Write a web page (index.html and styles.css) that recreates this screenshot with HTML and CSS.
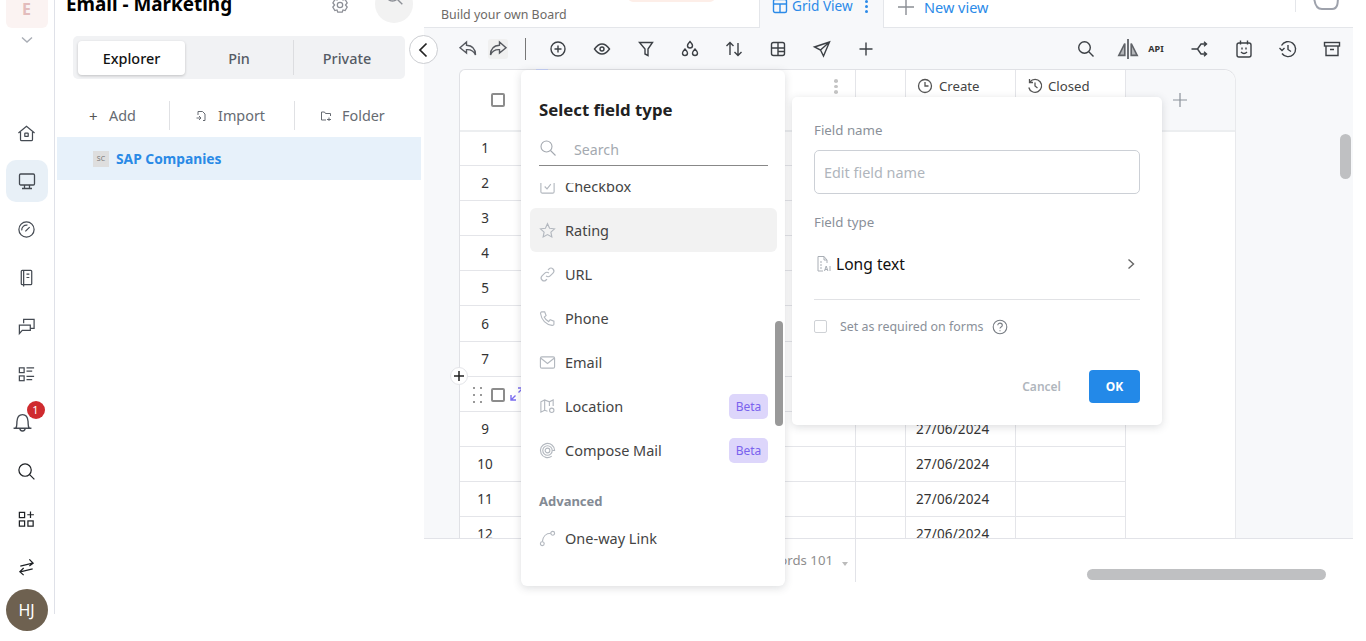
FILE: index.html
```html
<!DOCTYPE html>
<html lang="en">
<head>
<meta charset="utf-8">
<title>Email - Marketing</title>
<link rel="stylesheet" href="styles.css">
</head>
<body>
<div class="app">
  <nav class="rail">
    <div class="org">E</div>
    <svg class="org-chevron" width="14" height="8" viewBox="0 0 14 8"><path d="M2 1.500l5 4.500 5-4.500"/></svg>
    <div class="rail-list">
      <a class="rail-item"><svg viewBox="0 0 20 20"><path d="M1.500 9.500L10 2.500l8.500 7M3.700 8.500v7.700q0 1.300 1.300 1.300h10q1.300 0 1.300-1.300V8.500"/><rect x="8.200" y="9.500" width="3.600" height="3.600" rx=".6"/></svg></a>
      <a class="rail-item rail-active"><svg viewBox="0 0 20 20"><rect x="2.500" y="3" width="15" height="11" rx="1.200"/><path d="M7.500 14v3.500M12.500 14v3.500M5 17.500h10"/></svg></a>
      <a class="rail-item"><svg viewBox="0 0 20 20"><circle cx="10" cy="10" r="8"/><path d="M5 11a5 5 0 0 1 6-5.500M8.800 12l4.500-4.500"/></svg></a>
      <a class="rail-item"><svg viewBox="0 0 20 20"><rect x="4.500" y="2.500" width="11" height="15" rx="1"/><path d="M7 2.500v17M10 6.500h3M10 10h3"/></svg></a>
      <a class="rail-item"><svg viewBox="0 0 20 20"><path d="M7 6.500V2.500h11V12h-4M2.500 8.500H14v5.500H5.500L2.500 17.500z"/></svg></a>
      <a class="rail-item"><svg viewBox="0 0 20 20"><rect x="2.500" y="3" width="5" height="5"/><rect x="2.500" y="11.500" width="5" height="5"/><path d="M10 3h8M10 6.500h6M10 12h8M10 15.500h6"/></svg></a>
      <a class="rail-item rail-bell"><svg viewBox="0 0 20 20"><path d="M1.500 15.500h17M3.500 15.500c1.500-2 1-4 1.200-6.500C5 5 7 2.500 10 2.500s5 2.500 5.300 6.500c.2 2.500-.3 4.500 1.200 6.500M7.500 15.500c0 3.500 5 3.500 5 0"/></svg><span class="badge">1</span></a>
      <a class="rail-item rail-dark"><svg viewBox="0 0 20 20"><circle cx="8.500" cy="8.500" r="6.500"/><path d="M13.300 13.300l5 5"/></svg></a>
      <a class="rail-item rail-dark"><svg viewBox="0 0 20 20"><rect x="2.500" y="2.500" width="5.500" height="5.500"/><rect x="2.500" y="11.500" width="5.500" height="5.500"/><rect x="11.500" y="11.500" width="5.500" height="5.500"/><path d="M14.200 1.500v7M10.800 5h7"/></svg></a>
      <a class="rail-item rail-dark"><svg viewBox="0 0 20 20"><path d="M3.500 8.500L16.500 5.500M13 1.500l4 4-4 3M16.500 11.500l-13 3M7 10.500l-4 4 4 3.500"/></svg></a>
    </div>
    <div class="avatar">HJ</div>
  </nav>

  <aside class="side">
    <header class="side-head">
      <h1 class="side-title">Email - Marketing</h1>
      <svg class="side-gear" width="18" height="18" viewBox="0 0 20 20"><path d="M7.500 2h5l.8 2.500 2.400-.7 2.300 4-1.900 2.200 1.900 2.200-2.300 4-2.400-.7-.8 2.500h-5l-.8-2.500-2.400.7-2.300-4L4 10 2.100 7.800l2.300-4 2.400.7z"/><circle cx="10" cy="10" r="3"/></svg>
      <div class="side-search"><svg width="20" height="20" viewBox="0 0 20 20"><circle cx="8.500" cy="8.500" r="6.500"/><path d="M13.300 13.300l5 5"/></svg></div>
    </header>
    <div class="seg">
      <div class="seg-item seg-active">Explorer</div>
      <div class="seg-item seg-pin">Pin</div>
      <div class="seg-item seg-private">Private</div>
    </div>
    <div class="actions">
      <div class="action action-add"><span class="action-plus">+</span><span>Add</span></div>
      <div class="action action-import"><svg width="12" height="12" viewBox="0 0 12 12"><path d="M4 1.500h3.500L10 4v6.500H8M3 5V1.500h1M1.500 8H6M4 6L6 8l-2 2"/></svg><span>Import</span></div>
      <div class="action action-folder"><svg width="12" height="12" viewBox="0 0 12 12"><path d="M6 10H1.500V2h3l1 1.500h5V6M9 7.500v3.500M7 9.500h4"/></svg><span>Folder</span></div>
    </div>
    <div class="tree-row"><span class="tree-icon">SC</span><span class="tree-name">SAP Companies</span></div>
  </aside>

  <main class="main">
    <div class="tabs">
      <div class="board-sub">Build your own Board</div>
      <div class="board-pill"></div>
      <div class="tab-active">
        <svg class="tab-grid" width="16" height="16" viewBox="0 0 16 16"><rect x="1.500" y="1.500" width="13" height="13" rx="1.500"/><path d="M1.500 6h13M8 6v8.500"/></svg>
        <span>Grid View</span>
        <span class="tab-kebab"><i></i><i></i><i></i></span>
      </div>
      <div class="tab-new">
        <svg width="18" height="18" viewBox="0 0 18 18"><path d="M9 1v16M1 9h16"/></svg>
        <span>New view</span>
      </div>
      <div class="tabs-end"><svg width="28" height="12" viewBox="0 0 28 12"><path d="M2 -6c0 10 2 15 8 15h10c6 0 6-6 6-15"/></svg></div>
    </div>

    <div class="toolbar">
      <button class="tool tool-undo"><svg viewBox="0 0 20 20"><path d="M8.500 3L2 8.800 8.500 14v-3.300c4-.3 7 .7 9 5.300 0-6-3.500-9.500-9-9.800z"/></svg></button>
      <button class="tool tool-redo"><svg viewBox="0 0 20 20"><path d="M11.500 3L18 8.800 11.500 14v-3.300c-4-.3-7 .7-9 5.300 0-6 3.500-9.500 9-9.800z"/></svg></button>
      <span class="tool-sep"></span>
      <button class="tool"><svg viewBox="0 0 20 20"><circle cx="10" cy="10" r="7"/><path d="M10 6.500v7M6.500 10h7"/></svg></button>
      <button class="tool"><svg viewBox="0 0 20 20"><path d="M2.500 10C5 6.500 7.500 5 10 5s5 1.500 7.500 5c-2.500 3.500-5 5-7.500 5s-5-1.500-7.500-5z"/><circle cx="10" cy="10" r="2"/></svg></button>
      <button class="tool"><svg viewBox="0 0 20 20"><path d="M3.500 3.500h13L12 10v6.500L9 15v-5z"/></svg></button>
      <button class="tool"><svg viewBox="0 0 20 20"><path d="M10 2.500c1.800 2 2.500 3 2.500 4a2.500 2.500 0 0 1-5 0c0-1 .7-2 2.500-4zM5 10c1.800 2 2.500 3 2.500 4a2.500 2.500 0 0 1-5 0c0-1 .7-2 2.500-4zM15 10c1.800 2 2.500 3 2.500 4a2.500 2.500 0 0 1-5 0c0-1 .7-2 2.500-4z"/></svg></button>
      <button class="tool"><svg viewBox="0 0 20 20"><path d="M6 16V3.500M2.500 7L6 3.500 9.500 7M14 4v12.500M10.500 13l3.500 3.500 3.500-3.500"/></svg></button>
      <button class="tool"><svg viewBox="0 0 20 20"><rect x="3.500" y="3.500" width="13" height="13" rx="2"/><path d="M3.500 9h13M10 3.500v13M10 12.500h6.500"/></svg></button>
      <button class="tool"><svg viewBox="0 0 20 20"><path d="M17.500 3L2.500 8l6 3 3 6zM8.500 11L17.500 3"/></svg></button>
      <button class="tool"><svg viewBox="0 0 20 20"><path d="M10 3.500v13M3.500 10h13"/></svg></button>
      <button class="tool tool-right"><svg viewBox="0 0 20 20"><circle cx="8.500" cy="8.500" r="5.800"/><path d="M12.800 12.800l4.700 4.700"/></svg></button>
      <button class="tool tool-compare"><svg viewBox="0 0 24 24"><path class="thick" d="M12 1v22"/><path class="filled" d="M8.500 6L2 19h6.500zM15.500 6L22 19h-6.500z"/></svg></button>
      <span class="tool-api">API</span>
      <button class="tool"><svg viewBox="0 0 20 20"><path d="M1.500 10h6M7.500 10l3.500-5h5M7.500 10l3.500 5h5M14 2.800L16.500 5 14 7.200M14 12.800l2.500 2.200-2.500 2.200"/></svg></button>
      <button class="tool"><svg viewBox="0 0 20 20"><rect x="3" y="4" width="14" height="14" rx="2"/><path d="M6.500 1.500v4M13.500 1.500v4M8 8.500v2M12 8.500v2M7 13c2 2 4 2 6 0"/></svg></button>
      <button class="tool"><svg viewBox="0 0 20 20"><path d="M3.500 6.500A7.500 7.500 0 1 1 4 14.500M1.500 9l2.500 2.500L6.500 9M10 6v4.500l3 2"/></svg></button>
      <button class="tool"><svg viewBox="0 0 20 20"><rect x="2.500" y="3.500" width="15" height="3.500"/><path d="M4 7v9.500h12V7M8 10.500h4"/></svg></button>
    </div>

    <div class="board">
      <div class="sheet">
        <div class="sheet-tick"></div>
        <div class="sheet-head">
          <div class="head-main">
            <span class="box box-head"></span>
            <span class="head-kebab"><i></i><i></i><i></i></span>
          </div>
          <div class="head-cell"></div>
          <div class="head-cell head-date">
            <svg width="16" height="16" viewBox="0 0 16 16"><circle cx="8" cy="8" r="6.500"/><path d="M8 4v4h3.500"/></svg><span>Create</span>
          </div>
          <div class="head-cell head-date">
            <svg width="16" height="16" viewBox="0 0 16 16"><path d="M3 3.800A6.500 6.500 0 1 1 1.800 9.500M2.500 1v3.500H6M8 4.500V8l2.500 2"/></svg><span>Closed</span>
          </div>
          <div class="head-add"><svg width="16" height="16" viewBox="0 0 16 16"><path d="M8 1v14M1 8h14"/></svg></div>
        </div>
        <div class="row"><div class="c-main"><span class="num">1</span></div><div class="c"></div><div class="c c-date">27/06/2024</div><div class="c"></div></div>
        <div class="row"><div class="c-main"><span class="num">2</span></div><div class="c"></div><div class="c c-date">27/06/2024</div><div class="c"></div></div>
        <div class="row"><div class="c-main"><span class="num">3</span></div><div class="c"></div><div class="c c-date">27/06/2024</div><div class="c"></div></div>
        <div class="row"><div class="c-main"><span class="num">4</span></div><div class="c"></div><div class="c c-date">27/06/2024</div><div class="c"></div></div>
        <div class="row"><div class="c-main"><span class="num">5</span></div><div class="c"></div><div class="c c-date">27/06/2024</div><div class="c"></div></div>
        <div class="row"><div class="c-main"><span class="num">6</span></div><div class="c"></div><div class="c c-date">27/06/2024</div><div class="c"></div></div>
        <div class="row"><div class="c-main"><span class="num">7</span></div><div class="c"></div><div class="c c-date">27/06/2024</div><div class="c"></div></div>
        <div class="row"><div class="c-main c-hover">
          <span class="grip"><i></i><i></i><i></i><i></i><i></i><i></i></span>
          <span class="box"></span>
          <svg class="expand" width="14" height="14" viewBox="0 0 14 14"><path d="M8 1h5v5M13 1L8.500 5.500M6 13H1V8M1 13l4.500-4.500"/></svg>
        </div><div class="c"></div><div class="c c-date">27/06/2024</div><div class="c"></div></div>
        <div class="row"><div class="c-main"><span class="num">9</span></div><div class="c"></div><div class="c c-date">27/06/2024</div><div class="c"></div></div>
        <div class="row"><div class="c-main"><span class="num">10</span></div><div class="c"></div><div class="c c-date">27/06/2024</div><div class="c"></div></div>
        <div class="row"><div class="c-main"><span class="num">11</span></div><div class="c"></div><div class="c c-date">27/06/2024</div><div class="c"></div></div>
        <div class="row"><div class="c-main"><span class="num">12</span></div><div class="c"></div><div class="c c-date">27/06/2024</div><div class="c"></div></div>
      </div>
    </div>

    <footer class="foot">
      <div class="records"><span>Records 101</span><i class="caret"></i></div>
      <div class="hscroll"></div>
    </footer>

    <div class="vscroll"></div>
  </main>
</div>

<button class="collapse"><svg width="12" height="16" viewBox="0 0 12 16"><path d="M9.500 1.500L3 8l6.500 6.500"/></svg></button>
<button class="row-add"><svg width="12" height="12" viewBox="0 0 12 12"><path d="M6 1v10M1 6h10"/></svg></button>

<section class="picker">
  <h2 class="picker-title">Select field type</h2>
  <div class="picker-search">
    <svg width="18" height="18" viewBox="0 0 18 18"><circle cx="7.500" cy="7.500" r="5.500"/><path d="M11.500 11.500l5 5"/></svg>
    <span>Search</span>
  </div>
  <div class="picker-list">
    <div class="pick pick-cut"><svg viewBox="0 0 18 18"><rect x="2" y="2" width="14" height="14" rx="1.500"/><path d="M6 9l2.500 2.500L12.500 6.500"/></svg><span>Checkbox</span></div>
    <div class="pick pick-on"><svg viewBox="0 0 18 18"><path d="M9 1.800l2.200 4.800 5.200.6-3.800 3.500 1 5.200L9 13.300l-4.600 2.600 1-5.200-3.800-3.500 5.200-.6z"/></svg><span>Rating</span></div>
    <div class="pick"><svg viewBox="0 0 18 18"><path d="M7.500 10.500a3 3 0 0 0 4.300 0l3-3a3 3 0 0 0-4.300-4.300L9.500 4.300M10.500 7.500a3 3 0 0 0-4.300 0l-3 3a3 3 0 0 0 4.300 4.300l1-1"/></svg><span>URL</span></div>
    <div class="pick"><svg viewBox="0 0 18 18"><path d="M3 2h3l1.500 4-2 1.500c1 2.200 2.500 3.800 4.800 4.800l1.500-2 4 1.500v3c0 1-1 1.700-2 1.500C7.500 15.500 2.500 10.500 1.700 4 1.500 3 2 2 3 2z"/></svg><span>Phone</span></div>
    <div class="pick"><svg viewBox="0 0 18 18"><rect x="1.500" y="3" width="15" height="12" rx="1.500"/><path d="M2 4.500l7 5.500 7-5.500"/></svg><span>Email</span></div>
    <div class="pick"><svg viewBox="0 0 18 18"><path d="M6 13l-4 2V4l4-2 5 2 4-2v6.500M6 2v11M11 4v4.500M6 13l3 1"/><circle cx="13.500" cy="13" r="2.300"/></svg><span>Location</span><em class="beta">Beta</em></div>
    <div class="pick"><svg viewBox="0 0 18 18"><circle cx="9" cy="9" r="2.500"/><circle cx="9" cy="9" r="5"/><path d="M14 9h2.500a7.500 7.500 0 1 0-3 6"/></svg><span>Compose Mail</span><em class="beta">Beta</em></div>
    <div class="pick-group">Advanced</div>
    <div class="pick pick-link"><svg viewBox="0 0 18 18"><circle cx="3.500" cy="14.500" r="2"/><circle cx="14.500" cy="3.500" r="2"/><path d="M3.500 12.500C4 7 7.500 3.500 12.500 3.500"/></svg><span>One-way Link</span></div>
  </div>
  <div class="picker-thumb"></div>
</section>

<section class="field">
  <label class="field-label">Field name</label>
  <div class="field-input">Edit field name</div>
  <label class="field-label field-label-type">Field type</label>
  <div class="field-type">
    <svg class="ft-icon" width="16" height="18" viewBox="0 0 16 18"><path d="M7 16H2V1.500h6L11 5v3M8 1.500V5h3M4 7h2M4 10h2M4 13h2"/><path class="ft-ai" d="M8.500 16l1.700-5 1.700 5M9 14.500h2.500M14 11v5"/></svg>
    <span>Long text</span>
    <svg class="ft-chevron" width="8" height="12" viewBox="0 0 8 12"><path d="M1.500 1.500L6.500 6l-5 4.500"/></svg>
  </div>
  <div class="field-required">
    <span class="field-check"></span>
    <span>Set as required on forms</span>
    <svg width="16" height="16" viewBox="0 0 16 16"><circle cx="8" cy="8" r="6.800"/><path d="M5.800 6.300c0-3 4.500-2.800 4.500 0 0 1.800-2.300 1.700-2.300 3.200M8 11.200v1"/></svg>
  </div>
  <div class="field-buttons">
    <span class="btn-cancel">Cancel</span>
    <span class="btn-ok">OK</span>
  </div>
</section>
</body>
</html>
```
FILE: styles.css
```css
* { box-sizing: border-box; }
html, body { margin: 0; padding: 0; height: 641px; overflow: hidden; background: #fff; }
body { font-family: "Noto Sans", "Open Sans", sans-serif; color: #333; position: relative; }
button { border: 0; padding: 0; background: none; font: inherit; }
svg { display: block; fill: none; stroke: currentColor; stroke-width: 1.4; }

.app { display: flex; width: 1366px; height: 641px; }

/* left rail */
.rail { width: 55px; height: 614px; border-right: 1px solid #dfe1e8; display: flex; flex-direction: column; align-items: center; flex: none; padding-right: 1px; }
.org { width: 42px; height: 44px; margin-top: -16px; background: #fbf3f2; border-radius: 6px; color: #e3bcbc; font-weight: 700; font-size: 16px; display: flex; align-items: center; justify-content: center; padding-top: 6px; flex: none; }
.org-chevron { margin-top: 8px; color: #a9adb5; flex: none; }
.rail-list { margin-top: 68px; display: flex; flex-direction: column; align-items: center; flex: none; }
.rail-item { width: 42px; height: 42px; margin-bottom: 6.3px; display: flex; align-items: center; justify-content: center; color: #444a52; position: relative; border-radius: 10px; flex: none; }
.rail-item svg { width: 19px; height: 19px; stroke-width: 1.3; }
.rail-active { background: #e8f0f7; }
.rail-active svg { width: 20px; height: 20px; }
.rail-bell svg { width: 21px; height: 21px; margin-left: -9px; }
.rail-dark { color: #1f2226; }
.badge { position: absolute; left: 21px; top: -1px; width: 18px; height: 18px; border-radius: 50%; background: #cf2b2f; color: #fff; font-size: 11px; line-height: 18px; text-align: center; }
.avatar { width: 42px; height: 42px; border-radius: 50%; background: #6e6150; color: #fff; font-size: 16px; display: flex; align-items: center; justify-content: center; flex: none; margin-bottom: -30px; margin-top: -6px; }

/* explorer */
.side { width: 369px; flex: none; }
.side-head { height: 24px; margin-top: -8px; padding-left: 11px; display: flex; align-items: flex-end; position: relative; }
.side-title { margin: 0; font-size: 18.900px; font-weight: 700; color: #000; line-height: 24px; white-space: nowrap; }
.side-gear { position: absolute; left: 276px; top: 4px; color: #8c8f96; }
.side-search { position: absolute; left: 320px; top: -7px; width: 38px; height: 38px; border-radius: 50%; background: #f2f2f2; color: #8c8f96; display: flex; align-items: center; justify-content: center; padding-bottom: 16px; }
.seg { margin: 20px 0 0 18px; width: 332px; height: 43px; background: #f1f2f4; border-radius: 5px; display: flex; align-items: center; font-size: 14.400px; color: #555b64; position: relative; }
.seg-item { display: flex; align-items: center; justify-content: center; height: 35px; font-weight: 500; padding-top: 1px; }
.seg-active { width: 107px; height: 34px; margin-left: 5px; background: #fff; border-radius: 4px; box-shadow: 0 1px 3px rgba(0,0,0,.2); color: #111; }
.seg-pin { width: 109px; border-right: 1px solid #dcdde0; }
.seg-private { width: 106px; }
.actions { display: flex; align-items: center; margin: 22px 0 0 18px; height: 29px; font-size: 14.400px; color: #666b72; }
.action { display: flex; align-items: center; height: 29px; }
.action svg { flex: none; stroke-width: 1; }
.action-add { width: 97px; padding-left: 16px; border-right: 1px solid #e0e1e4; }
.action-plus { width: 20px; font-size: 15px; color: #555; }
.action-import { width: 125px; padding-left: 25px; gap: 11px; border-right: 1px solid #e0e1e4; }
.action-folder { padding-left: 25px; gap: 10px; }
.tree-row { margin: 7px 3px 0 2px; height: 43px; background: #e7f1fa; display: flex; align-items: center; padding-left: 36px; }
.tree-icon { width: 16px; height: 16px; background: #dedede; color: #777; font-size: 7px; text-align: center; line-height: 16px; margin-right: 7px; }
.tree-name { color: #2a8ae6; font-weight: 700; font-size: 13.800px; }

/* main */
.main { width: 929px; height: 641px; flex: none; display: flex; flex-direction: column; position: relative; }
.tabs { height: 28px; border-bottom: 1px solid #e4e6ea; display: flex; position: relative; flex: none; }
.board-sub { margin: 6px 0 0 17px; width: 318px; font-size: 12.400px; line-height: 18px; color: #6d6a66; flex: none; }
.board-pill { position: absolute; left: 204px; top: -8px; width: 87px; height: 10px; border-radius: 5px; background: #fdeee8; }
.tab-active { width: 125px; height: 28px; background: #f7f8fa; border-left: 1px solid #e4e6ea; border-right: 1px solid #e4e6ea; color: #2b8ae8; display: flex; align-items: center; font-size: 13.600px; padding: 0 0 16px 12px; flex: none; }
.tab-active span { line-height: 16px; }
.tab-grid { margin-right: 4px; flex: none; }
.tab-kebab { display: flex; flex-direction: column; gap: 2px; margin-left: 12px; }
.tab-kebab i { width: 3px; height: 3px; background: #2b8ae8; border-radius: 50%; }
.tab-new { display: flex; align-items: center; color: #2b8ae8; font-size: 14.500px; padding: 0 0 14px 13px; height: 28px; gap: 9px; }
.tab-new svg { color: #8b8e94; }
.tabs-end { position: absolute; left: 871px; top: 0; height: 12px; padding-left: 16px; border-left: 1px solid #e4e6ea; color: #9ea2ac; }
.tabs-end svg { stroke-width: 2; }

.toolbar { height: 41px; background: #f7f8fa; display: flex; align-items: center; padding: 0 11px 0 34px; flex: none; color: #3c4045; }
.tool { width: 20px; height: 20px; margin-right: 24px; color: inherit; flex: none; }
.tool svg { width: 20px; height: 20px; stroke-width: 1.4; }
.tool:last-child { margin-right: 0; }
.tool-undo { margin-right: 10px; color: #55585e; }
.tool-redo { margin-right: 17px; background: #f0f0f0; border-radius: 3px; color: #55585e; }
.tool-sep { width: 1px; height: 22px; background: #777; margin-right: 22px; flex: none; }
.tool-right { margin-left: auto; margin-right: 22px; }
.tool-compare { margin-right: 8px; color: #606368; }
.tool-compare svg { width: 22px; height: 22px; margin: -1px; stroke-width: 1.5; }
.tool-compare .filled { fill: #b5b7ba; stroke: #606368; stroke-width: 1.800; }
.tool-compare .thick { stroke-width: 2; }
.tool-api { width: 20px; font-size: 9px; font-weight: 700; color: #333; margin-right: 24px; text-align: center; flex: none; }

.board { height: 469px; background: #f7f8fa; overflow: hidden; padding-left: 35px; flex: none; }
.sheet { width: 777px; position: relative; background: #fff; border-left: 1px solid #e0e1e5; border-right: 1px solid #e8e9ec; border-top: 1px solid #e0e1e5; border-radius: 6px 12px 0 0; min-height: 520px; }
.sheet-tick { position: absolute; left: 76px; top: -1px; width: 12px; height: 3px; background: #c5cff5; }
.sheet-head { display: flex; height: 62px; border-bottom: 2px solid #eceef0; }
.head-main { width: 396px; border-right: 1px solid #e4e5e9; position: relative; display: flex; align-items: center; padding-left: 31px; }
.box { display: block; width: 14px; height: 14px; border: 2px solid #8c8c8c; border-radius: 2px; flex: none; }
.head-kebab { position: absolute; left: 374px; top: 9px; display: flex; flex-direction: column; gap: 2px; }
.head-kebab i { width: 4px; height: 3.500px; background: #c4c4c4; border-radius: 50%; }
.head-cell { width: 50px; border-right: 1px solid #e4e5e9; }
.head-date { width: 110px; display: flex; align-items: flex-start; padding: 8px 0 0 11px; font-size: 13.200px; gap: 6px; color: #444; }
.head-date + .head-date { gap: 5px; }
.head-date svg { color: #555; stroke-width: 1.300; flex: none; }
.head-date span { line-height: 16px; }
.head-add { flex: 1; background: #f7f8fa; color: #8b929a; display: flex; align-items: center; justify-content: center; border-radius: 0 12px 0 0; }
.head-add svg { margin-right: 2px; stroke-width: 1.200; }
.row { display: flex; height: 35.100px; font-size: 13.500px; color: #333; }
.sheet-head + .row { margin-top: -1px; }
.c-main { width: 396px; border-right: 1px solid #e4e5e9; border-bottom: 1px solid #e4e5e9; display: flex; align-items: center; position: relative; }
.num { width: 50px; text-align: center; }
.c-hover { padding: 2px 0 0 13px; }
.grip { display: grid; grid-template-columns: 2px 2px; column-gap: 5px; row-gap: 5px; margin-right: 10px; }
.grip i { width: 2px; height: 2px; background: #999; }
.expand { color: #7a6cf0; margin-left: 5px; margin-top: -2px; }
.c-hover .box { margin-left: -1px; }
.c { width: 50px; border-right: 1px solid #e4e5e9; border-bottom: 1px solid #e4e5e9; }
.c-date { width: 110px; padding-left: 10px; line-height: 34px; white-space: nowrap; color: #333; letter-spacing: .15px; }
.row .c:last-child { width: 110px; }

.foot { height: 103px; border-top: 1px solid #e2e3e8; background: #fff; display: flex; flex: none; }
.records { width: 432px; height: 43px; border-right: 1px solid #e2e3e8; display: flex; justify-content: flex-end; padding: 12px 7px 0 0; font-size: 13.200px; color: #8e8e8e; gap: 9px; }
.records span { line-height: 18px; }
.caret { width: 0; height: 0; border-left: 3.500px solid transparent; border-right: 3.500px solid transparent; border-top: 4px solid #bbb; margin-top: 11px; }
.hscroll { width: 239px; height: 11px; border-radius: 6px; background: #bfc0c2; margin: 30px 0 0 231px; }
.vscroll { position: absolute; left: 916px; top: 134px; width: 11px; height: 45px; border-radius: 6px; background: #bfc0c2; }

/* overlay controls */
.collapse { position: absolute; left: 409px; top: 35px; width: 29px; height: 29px; border-radius: 50%; background: #fff; border: 1px solid #ccced2; color: #222; display: flex; align-items: center; justify-content: center; padding-right: 2px; }
.collapse svg { stroke-width: 1.700; }
.row-add { position: absolute; left: 450px; top: 367px; width: 18px; height: 18px; border-radius: 50%; background: #fff; border: 1px solid #e4e5e9; color: #222; display: flex; align-items: center; justify-content: center; }
.row-add svg { stroke-width: 1.500; }

/* field type picker */
.picker { position: absolute; left: 521px; top: 70px; width: 264px; height: 516px; background: #fff; border-radius: 6px; box-shadow: 0 2px 8px rgba(60,64,80,.18); padding: 28px 0 0 0; overflow: hidden; }
.picker-title { margin: 0 0 0 18px; font-size: 16.800px; line-height: 24px; font-weight: 700; color: #222; }
.picker-search { margin: 15px 17px 0 18px; height: 29px; border-bottom: 1px solid #888; display: flex; align-items: flex-start; color: #a4a9b0; font-size: 14.200px; }
.picker-search svg { margin-top: 2px; flex: none; stroke-width: 1.100; }
.picker-search span { margin-left: 17px; line-height: 26px; }
.picker-list { margin-top: 17px; height: 373px; overflow: hidden; padding: 0 8px 0 9px; position: relative; }
.pick { height: 44px; display: flex; align-items: center; padding-left: 9px; border-radius: 6px; font-size: 14.500px; color: #444; }
.pick svg { width: 17px; height: 17px; flex: none; color: #b3b8bf; margin-right: 9px; stroke-width: 1.200; }
.pick-cut { margin-top: -19px; }
.pick-on { background: #f2f2f2; }
.beta { margin-left: auto; margin-right: 9px; width: 39px; height: 25px; border-radius: 5px; background: #ddd6fb; color: #7a63ee; font-style: normal; font-size: 12px; line-height: 25px; text-align: center; }
.pick-group { font-size: 13px; font-weight: 700; color: #838a94; padding-left: 9px; line-height: 18px; margin-top: 20px; }
.pick-link { margin-top: 6px; }
.picker-thumb { position: absolute; left: 254px; top: 251px; width: 8px; height: 105px; border-radius: 4px; background: #999; }

/* field editor */
.field { position: absolute; left: 792px; top: 97px; width: 370px; height: 328px; background: #fff; border-radius: 5px; box-shadow: 0 2px 8px rgba(60,64,80,.18); padding: 24px 22px 0 22px; display: flex; flex-direction: column; }
.field-label { font-size: 13.300px; line-height: 18px; color: #8a9099; }
.field-input { margin-top: 11px; height: 44px; border: 1px solid #ccd0d6; border-radius: 5px; padding-left: 9px; font-size: 14.400px; line-height: 43px; color: #afb5bc; }
.field-label-type { margin-top: 19px; }
.field-type { margin-top: 11px; height: 44px; display: flex; align-items: center; padding: 0 5px 0 2px; color: #111; font-size: 15.600px; }
.ft-icon { color: #a9aeb5; stroke-width: 1; margin-right: 4px; flex: none; }
.ft-chevron { margin-left: auto; color: #666; }
.field-required { margin-top: 13px; border-top: 1px solid #e1e2e5; padding-top: 18px; display: flex; align-items: center; font-size: 12.400px; color: #8a9099; }
.field-required svg { margin-left: 9px; color: #777c83; stroke-width: 1.100; }
.field-check { width: 13px; height: 13px; border: 1px solid #cfd2d6; border-radius: 2px; margin-right: 13px; flex: none; }
.field-buttons { margin-top: 35px; display: flex; justify-content: flex-end; align-items: center; }
.btn-cancel { font-size: 12px; font-weight: 600; color: #b0b6bd; margin-right: 28px; }
.btn-ok { width: 51px; height: 33px; border-radius: 4px; background: #2389e8; color: #fff; font-size: 12px; font-weight: 700; line-height: 33px; text-align: center; }
```
